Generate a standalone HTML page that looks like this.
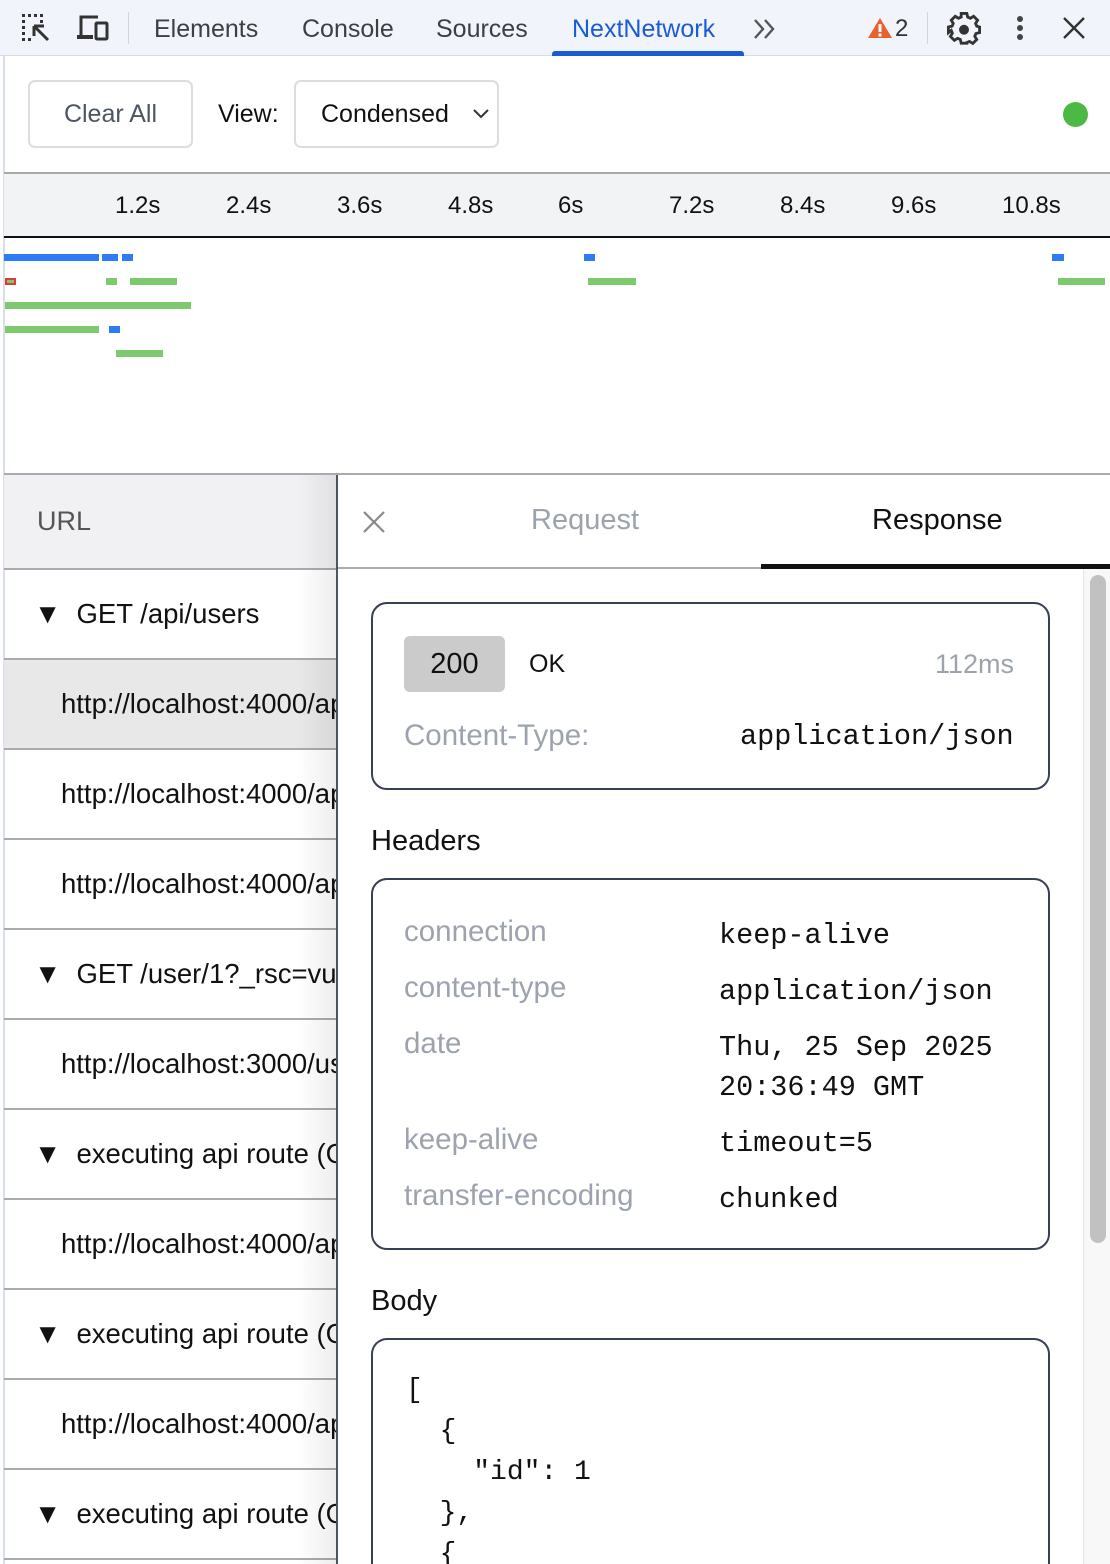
<!DOCTYPE html>
<html style="width:1110px;height:1564px;overflow:hidden"><head><meta charset="utf-8"><style>
*{box-sizing:border-box;margin:0;padding:0}
body{width:1110px;height:1564px;overflow:hidden;background:#fff;font-family:"Liberation Sans",sans-serif;color:#111;position:relative}
.a{position:absolute}
.tb{left:0;top:0;width:1110px;height:56px;background:#f1f4fa;border-bottom:1px solid #d6dbe5}
.tab{top:15px;font-size:25px;color:#3c4043}
.bar{position:absolute;height:7px}
.b{background:#2f7bf5}.g{background:#7cc96e}
.row{position:absolute;left:4px;width:333px;height:90px;border-bottom:2px solid #a9abb0;font-size:27.5px;line-height:88px;white-space:nowrap;overflow:hidden}
.mono{font-family:"Liberation Mono",monospace}
.lbl{color:#9ca3af;font-size:29.5px}
.card{position:absolute;left:371px;width:679px;border:2px solid #374151;border-radius:16px;background:#fff}
</style></head><body>
<div class="a tb"></div>
<div class="a" style="left:3px;top:56px;width:2px;height:1508px;background:#d8def0"></div>
<svg class="a" style="left:20px;top:13px" width="32" height="30" viewBox="0 0 32 30"><g fill="#333"><rect x="2" y="1" width="3" height="3"/><rect x="8" y="1" width="3" height="3"/><rect x="14" y="1" width="3" height="3"/><rect x="20" y="1" width="3" height="3"/><rect x="2" y="7" width="3" height="3"/><rect x="2" y="13" width="3" height="3"/><rect x="2" y="19" width="3" height="3"/><rect x="2" y="25" width="3" height="3"/><rect x="8" y="25" width="3" height="3"/><rect x="20" y="7" width="3" height="3"/></g><path d="M28 27 L14 13 M14 13 H24 M14 13 V23" stroke="#333" stroke-width="3" fill="none"/></svg>
<svg class="a" style="left:76px;top:14px" width="34" height="28" viewBox="0 0 34 28"><path d="M5 22V3H22" stroke="#333" stroke-width="3" fill="none"/><rect x="1" y="21" width="16" height="4" fill="#333"/><rect x="20" y="9" width="11" height="16" rx="1" stroke="#333" stroke-width="3" fill="none"/></svg>
<div class="a" style="left:128px;top:12px;width:1px;height:32px;background:#cfd5e0"></div>
<div class="a tab" style="left:154px">Elements</div>
<div class="a tab" style="left:302px">Console</div>
<div class="a tab" style="left:436px">Sources</div>
<div class="a tab" style="left:572px;color:#1a5bd6">NextNetwork</div>
<div class="a" style="left:552px;top:51px;width:192px;height:5px;background:#1a5bd6;border-radius:3px 3px 0 0"></div>
<svg class="a" style="left:752px;top:18px" width="26" height="22" viewBox="0 0 26 22"><path d="M3 2l8 9-8 9M13 2l8 9-8 9" stroke="#555" stroke-width="2.4" fill="none"/></svg>
<svg class="a" style="left:867px;top:17px" width="26" height="22" viewBox="0 0 26 22"><path d="M13 1L25 21H1Z" fill="#e8612c"/><rect x="11.5" y="7" width="3" height="8" fill="#fff"/><rect x="11.5" y="16.5" width="3" height="3" fill="#fff"/></svg>
<div class="a" style="left:895px;top:15px;font-size:24px;color:#333">2</div>
<div class="a" style="left:927px;top:12px;width:1px;height:32px;background:#cfd5e0"></div>
<svg class="a" style="left:947px;top:12px" width="34" height="34" viewBox="0 0 24 24"><path fill="none" stroke="#333" stroke-width="2" d="M10 2h4l.6 2.6 1.9.8 2.3-1.4 2.8 2.8-1.4 2.3.8 1.9L23 11.6v4l-2.6.6-.8 1.9 1.4 2.3-2.8 2.8-2.3-1.4-1.9.8L14 23h-4l-.6-2.6-1.9-.8-2.3 1.4-2.8-2.8 1.4-2.3-.8-1.9L1 15.6v-4l2.6-.6.8-1.9-1.4-2.3 2.8-2.8 2.3 1.4 1.9-.8z" transform="translate(0,-1)"/><circle cx="12" cy="12.5" r="3.5" fill="#333"/></svg>
<div class="a" style="left:1017px;top:16px;width:6px;height:6px;border-radius:3px;background:#444;box-shadow:0 9px 0 #444,0 18px 0 #444"></div>
<svg class="a" style="left:1062px;top:16px" width="24" height="24" viewBox="0 0 24 24"><path d="M2 2L22 22M22 2L2 22" stroke="#333" stroke-width="2.4"/></svg>

<div class="a" style="left:28px;top:80px;width:165px;height:68px;border:2px solid #ddd;border-radius:7px;font-size:25px;color:#4b5563;line-height:64px;text-align:center">Clear All</div>
<div class="a" style="left:218px;top:100px;font-size:25px">View:</div>
<div class="a" style="left:294px;top:80px;width:205px;height:68px;border:2px solid #ddd;border-radius:7px;font-size:25px;line-height:64px;padding-left:25px">Condensed</div>
<svg class="a" style="left:472px;top:108px" width="18" height="12" viewBox="0 0 18 12"><path d="M2 2l7 7 7-7" stroke="#333" stroke-width="2" fill="none"/></svg>
<div class="a" style="left:1063px;top:102px;width:25px;height:25px;border-radius:50%;background:#4cb944"></div>

<div class="a" style="left:4px;top:172px;width:1106px;height:66px;background:#f2f3f5;border-top:2px solid #aaa;border-bottom:2px solid #111"></div>
<div class="a" style="top:192px;left:0;width:1110px;font-size:24px">
<span class="a" style="left:115px">1.2s</span><span class="a" style="left:226px">2.4s</span><span class="a" style="left:337px">3.6s</span><span class="a" style="left:448px">4.8s</span><span class="a" style="left:558px">6s</span><span class="a" style="left:669px">7.2s</span><span class="a" style="left:780px">8.4s</span><span class="a" style="left:891px">9.6s</span><span class="a" style="left:1002px">10.8s</span></div>
<div class="bar b" style="left:4px;top:254px;width:95px"></div>
<div class="bar b" style="left:102px;top:254px;width:16px"></div>
<div class="bar b" style="left:122px;top:254px;width:11px"></div>
<div class="bar" style="left:5px;top:278px;width:11px;background:#7cc96e;border:2px solid #e03a3a"></div>
<div class="bar g" style="left:106px;top:278px;width:11px"></div>
<div class="bar g" style="left:130px;top:278px;width:47px"></div>
<div class="bar g" style="left:5px;top:302px;width:186px"></div>
<div class="bar g" style="left:5px;top:326px;width:94px"></div>
<div class="bar b" style="left:109px;top:326px;width:11px"></div>
<div class="bar g" style="left:116px;top:350px;width:47px"></div>
<div class="bar b" style="left:584px;top:254px;width:11px"></div>
<div class="bar g" style="left:588px;top:278px;width:48px"></div>
<div class="bar b" style="left:1052px;top:254px;width:12px"></div>
<div class="bar g" style="left:1058px;top:278px;width:47px"></div>

<div class="a" style="left:4px;top:473px;width:1106px;height:2px;background:#a9abb0"></div>
<div class="a" style="left:4px;top:475px;width:333px;height:95px;background:#f1f1f3;border-bottom:2px solid #a9abb0;font-size:27px;color:#555;line-height:92px;padding-left:33px">URL</div>
<div class="row" style="top:570px"><span style="margin-left:30px">▼</span>&nbsp;&nbsp;GET /api/users</div>
<div class="row" style="top:660px;background:#e8e8e8;padding-left:57px">http://localhost:4000/api/users</div>
<div class="row" style="top:750px;padding-left:57px">http://localhost:4000/api/users</div>
<div class="row" style="top:840px;padding-left:57px">http://localhost:4000/api/users</div>
<div class="row" style="top:930px"><span style="margin-left:30px">▼</span>&nbsp;&nbsp;GET /user/1?_rsc=vusbg</div>
<div class="row" style="top:1020px;padding-left:57px">http://localhost:3000/user/1</div>
<div class="row" style="top:1110px"><span style="margin-left:30px">▼</span>&nbsp;&nbsp;executing api route (GET)</div>
<div class="row" style="top:1200px;padding-left:57px">http://localhost:4000/api/users</div>
<div class="row" style="top:1290px"><span style="margin-left:30px">▼</span>&nbsp;&nbsp;executing api route (GET)</div>
<div class="row" style="top:1380px;padding-left:57px">http://localhost:4000/api/users</div>
<div class="row" style="top:1470px"><span style="margin-left:30px">▼</span>&nbsp;&nbsp;executing api route (GET)</div>
<div class="a" style="left:297px;top:475px;width:40px;height:1089px;background:linear-gradient(90deg,rgba(0,0,0,0),rgba(0,0,0,0.07))"></div>
<div class="a" style="left:336px;top:475px;width:2px;height:1089px;background:#4b5563"></div>

<div class="a" style="left:338px;top:567px;width:772px;height:2px;background:#a9abb0"></div>
<svg class="a" style="left:362px;top:510px" width="24" height="24" viewBox="0 0 24 24"><path d="M2 2L22 22M22 2L2 22" stroke="#888" stroke-width="2.2"/></svg>
<div class="a" style="left:531px;top:504px;font-size:29px;color:#9ca3af">Request</div>
<div class="a" style="left:872px;top:504px;font-size:29px;color:#111">Response</div>
<div class="a" style="left:761px;top:564px;width:349px;height:5px;background:#111"></div>

<div class="a" style="left:1083px;top:569px;width:27px;height:995px;background:#f8f8f8;border-left:1px solid #e6e6e6"></div>
<div class="a" style="left:1090px;top:575px;width:16px;height:668px;border-radius:8px;background:#c1c1c1"></div>

<div class="card" style="top:602px;height:188px"></div>
<div class="a" style="left:404px;top:636px;width:101px;height:56px;background:#cbcbcb;border-radius:6px;font-size:29px;line-height:56px;text-align:center">200</div>
<div class="a" style="left:529px;top:650px;font-size:25px">OK</div>
<div class="a lbl" style="left:935px;top:649px;font-size:27px">112ms</div>
<div class="a lbl" style="left:404px;top:719px">Content-Type:</div>
<div class="a mono" style="left:740px;top:720px;font-size:28.5px">application/json</div>

<div class="a" style="left:371px;top:825px;font-size:29px">Headers</div>
<div class="card" style="top:878px;height:372px"></div>
<div class="a lbl" style="left:404px;top:915px">connection</div>
<div class="a lbl" style="left:404px;top:971px">content-type</div>
<div class="a lbl" style="left:404px;top:1027px">date</div>
<div class="a lbl" style="left:404px;top:1123px">keep-alive</div>
<div class="a lbl" style="left:404px;top:1179px">transfer-encoding</div>
<div class="a mono" style="left:719px;top:916px;font-size:28.5px;line-height:40px">keep-alive</div>
<div class="a mono" style="left:719px;top:972px;font-size:28.5px;line-height:40px">application/json</div>
<div class="a mono" style="left:719px;top:1028px;font-size:28.5px;line-height:40px">Thu, 25 Sep 2025<br>20:36:49 GMT</div>
<div class="a mono" style="left:719px;top:1124px;font-size:28.5px;line-height:40px">timeout=5</div>
<div class="a mono" style="left:719px;top:1180px;font-size:28.5px;line-height:40px">chunked</div>

<div class="a" style="left:371px;top:1285px;font-size:29px">Body</div>
<div class="card" style="top:1338px;height:240px;border-bottom:none;border-radius:16px 16px 0 0"></div>
<pre class="a mono" style="left:406px;top:1370px;font-size:28px;line-height:41px">[
  {
    "id": 1
  },
  {</pre>
</body></html>
